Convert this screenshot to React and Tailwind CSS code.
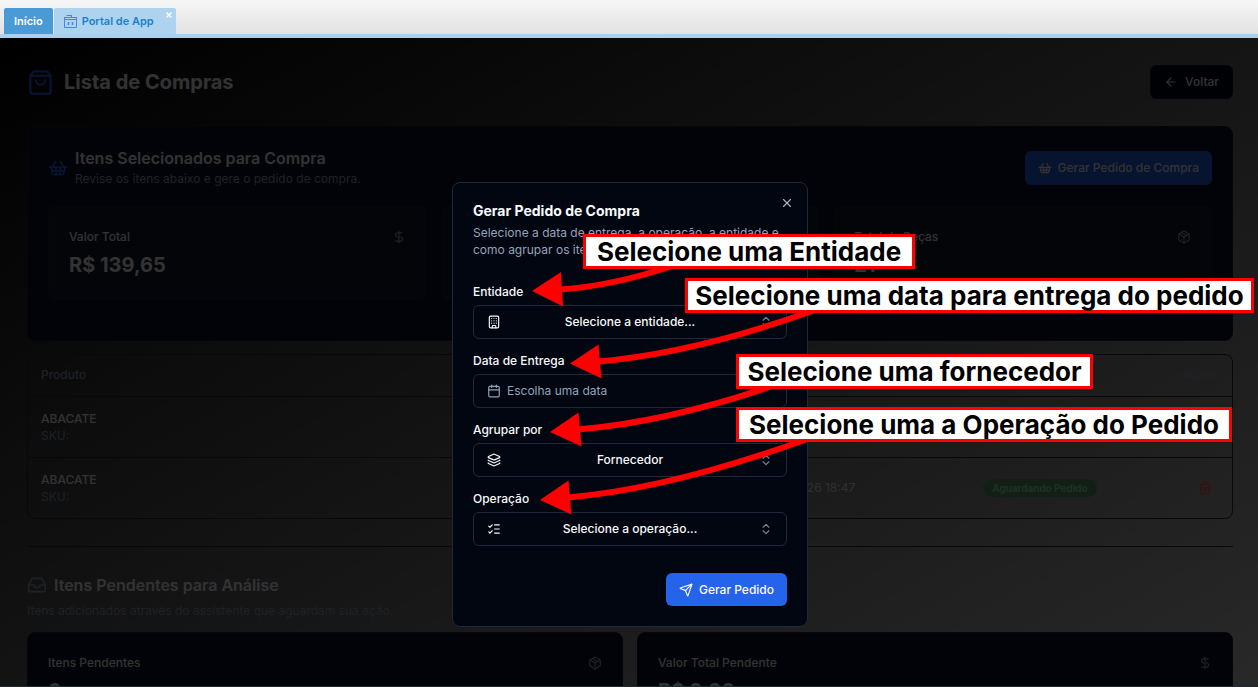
import React from 'react';
import {
  ArrowLeft,
  Building,
  Calendar,
  ChevronsUpDown,
  DollarSign,
  Inbox,
  Layers,
  ListChecks,
  Package,
  Send,
  ShoppingBag,
  ShoppingBasket,
  Trash2,
  X
} from 'lucide-react';

const itens = [
  { id: 1, nome: 'ABACATE', data: '05/01/2026 18:47', status: 'Aguardando Pedido' },
  { id: 2, nome: 'ABACATE', data: '05/01/2026 18:47', status: 'Aguardando Pedido' }
];

// Pequeno ícone de portal usado na aba
function PortalIcon() {
  return (
    <svg width="13" height="13" viewBox="0 0 13 13" fill="none" stroke="#4285f4" aria-hidden="true">
      <path d="M0.5 4.500h12v8h-12z" />
      <path d="M0 2.500h13M2.500 0.500h5M7.500 0v3M0.500 2v3M12.500 2v3" />
      <path d="M4.500 7v3M8.500 7v3" strokeWidth="1.500" />
    </svg>
  );
}

function TabBar() {
  return (
    <nav className="flex h-[38px] shrink-0 items-end gap-px border-b-4 border-[#a9d0ed] bg-linear-to-b from-[#f6f6f6] to-[#e2e2e2] pl-1 text-[11px] font-semibold">
      <a href="#inicio" className="flex h-[26px] items-center rounded-t-xs bg-[#4a9ad6] px-[10px] text-white">
        Início
      </a>
      <div className="relative flex h-[26px] items-center rounded-t-xs bg-[#aed3ef] pr-[22px] pl-[10px] text-[#1c81cc]">
        <a href="#portal" className="flex items-center gap-[5px]">
          <PortalIcon />
          Portal de App
        </a>
        <button type="button" aria-label="Fechar aba" className="absolute top-[3px] right-[3px] text-white">
          <X size={8} strokeWidth={4} />
        </button>
      </div>
    </nav>
  );
}

function StatCard({ label, value, icon: Icon, className }) {
  return (
    <div className={`flex-1 rounded-lg border p-5 ${className}`}>
      <div className="flex items-center justify-between">
        <h3 className="text-xs leading-5 font-medium">{label}</h3>
        <Icon size={14} className="text-[#94a3b8]" />
      </div>
      <p className="mt-1 text-xl leading-7 font-bold">{value}</p>
    </div>
  );
}

function ItensTable() {
  return (
    <div className="mt-[13px] overflow-hidden rounded-lg border border-[#1e293b]">
      <table className="w-full table-fixed text-left text-xs">
        <thead>
          <tr className="h-[41px] border-b border-[#1e293b] text-[#94a3b8]">
            <th className="px-[13px] font-medium">Produto</th>
            <th aria-label="Data" className="w-[230px]" />
            <th aria-label="Status" className="w-[216px]" />
            <th className="w-[84px] px-[14px] text-right font-medium">Ações</th>
          </tr>
        </thead>
        <tbody>
          {itens.map((item) => (
            <tr key={item.id} className="h-[61px] border-b border-[#1e293b] last:border-b-0">
              <td className="px-[13px] leading-[17px]">
                <div className="font-medium">{item.nome}</div>
                <div className="text-[#94a3b8]">SKU:</div>
              </td>
              <td className="px-[54px] whitespace-nowrap text-[#e2e8f0]">{item.data}</td>
              <td className="text-center">
                <span className="inline-block rounded-full bg-[#5f9a70] px-[9px] text-[10px] leading-[18px] font-semibold text-[#8ffcb6]">
                  {item.status}
                </span>
              </td>
              <td className="pr-[20px] text-right">
                <button type="button" aria-label="Remover item" className="align-middle text-[#ff5050]">
                  <Trash2 size={14} />
                </button>
              </td>
            </tr>
          ))}
        </tbody>
      </table>
    </div>
  );
}

function ListaCompras() {
  return (
    <div className="min-h-full bg-linear-to-br/srgb from-black to-[#cfcfcf] pt-[27px] pr-[25px] pl-[27px] text-[#f8fafc]">
      <header className="flex items-center justify-between">
        <h1 className="flex items-center gap-[10px] text-xl font-bold">
          <ShoppingBag size={27} className="text-[#2563eb]" />
          Lista de Compras
        </h1>
        <button type="button" className="flex h-[34px] items-center gap-[7px] rounded-md border border-[#0f172a] bg-[#020617] px-[13px] text-xs font-medium">
          <ArrowLeft size={14} />
          Voltar
        </button>
      </header>

      <section className="mt-[27px] rounded-lg border border-[#172036] bg-[#0a0f28] px-5 pt-5 pb-10">
        <div className="flex items-center justify-between">
          <div className="flex items-center gap-[7px]">
            <ShoppingBasket size={20} className="text-[#2563eb]" />
            <div>
              <h2 className="text-base leading-[22px] font-semibold">Itens Selecionados para Compra</h2>
              <p className="text-xs leading-5 text-[#94a3b8]">Revise os itens abaixo e gere o pedido de compra.</p>
            </div>
          </div>
          <button type="button" className="flex h-[34px] items-center gap-[6px] rounded-md bg-[#2563eb] px-[13px] text-xs font-medium">
            <ShoppingBasket size={14} />
            Gerar Pedido de Compra
          </button>
        </div>
        <div className="mt-[17px] flex gap-[14px]">
          <StatCard label="Valor Total" value="R$ 139,65" icon={DollarSign} className="border-[#1c2232] bg-[#141a2a]" />
          <StatCard label="Total de Itens" value="2" icon={Layers} className="border-[#1c2232] bg-[#141a2a]" />
          <StatCard label="Total de Peças" value="21" icon={Package} className="border-[#1c2232] bg-[#141a2a]" />
        </div>
      </section>

      <ItensTable />

      <hr className="mt-[27px] border-[#1e293b]" />

      <h2 className="mt-[27px] flex items-center gap-[7px] text-base leading-[22px] font-semibold">
        <Inbox size={20} className="text-[#94a3b8]" />
        Itens Pendentes para Análise
      </h2>
      <p className="mt-[6px] text-xs leading-[18px] text-[#94a3b8]">
        Itens adicionados através do assistente que aguardam sua ação.
      </p>
      <div className="mt-3 flex gap-[14px]">
        <StatCard label="Itens Pendentes" value="0" icon={Package} className="border-[#172036] bg-[#0a0f28]" />
        <StatCard label="Valor Total Pendente" value="R$ 0,00" icon={DollarSign} className="border-[#172036] bg-[#0a0f28]" />
      </div>
    </div>
  );
}

function SelectField({ id, label, icon: Icon, placeholder }) {
  return (
    <div className="flex flex-col gap-[7px]">
      <label htmlFor={id} className="text-xs leading-3 font-medium">{label}</label>
      <div className="relative">
        <Icon size={14} className="pointer-events-none absolute top-[10px] left-[14px]" />
        <select
          id={id}
          className="h-[34px] w-full appearance-none rounded-md border border-[#1e293b] bg-[#020611] px-8 text-center text-xs font-medium"
        >
          <option>{placeholder}</option>
        </select>
        <ChevronsUpDown size={14} className="pointer-events-none absolute top-[10px] right-[14px] opacity-50" />
      </div>
    </div>
  );
}

function PedidoDialog() {
  return (
    <div
      role="dialog"
      aria-labelledby="pedido-titulo"
      className="relative w-[356px] rounded-lg border border-[#1e293b] bg-[#020611] p-5 text-[#f8fafc]"
    >
      <h2 id="pedido-titulo" className="text-sm leading-4 font-bold">Gerar Pedido de Compra</h2>
      <p className="mt-[5px] text-xs leading-[17px] text-[#94a3b8]">
        Selecione a data de entrega, a operação, a entidade e como agrupar os itens.
      </p>
      <button type="button" aria-label="Fechar" className="absolute top-[13px] right-[13px] opacity-70">
        <X size={14} />
      </button>

      <form className="mt-7 flex flex-col gap-4">
        <SelectField id="entidade" label="Entidade" icon={Building} placeholder="Selecione a entidade..." />
        <div className="flex flex-col gap-[7px]">
          <label htmlFor="data-entrega" className="text-xs leading-3 font-medium">Data de Entrega</label>
          <button
            id="data-entrega"
            type="button"
            className="flex h-[34px] items-center gap-[6px] rounded-md border border-[#1e293b] px-[13px] text-xs text-[#94a3b8]"
          >
            <Calendar size={14} />
            Escolha uma data
          </button>
        </div>
        <SelectField id="agrupar" label="Agrupar por" icon={Layers} placeholder="Fornecedor" />
        <SelectField id="operacao" label="Operação" icon={ListChecks} placeholder="Selecione a operação..." />
        <button
          type="button"
          className="mt-[11px] flex h-[33px] items-center gap-[6px] self-end rounded-md bg-[#2563eb] px-[13px] text-xs font-medium"
        >
          <Send size={14} />
          Gerar Pedido
        </button>
      </form>
    </div>
  );
}

// Setas e legendas do tutorial, ancoradas no canto do diálogo
function Anotacoes() {
  const caixa = 'absolute flex h-[35px] items-center justify-center border-3 border-[#ff0000] bg-white text-[26px] font-bold whitespace-nowrap text-black';
  return (
    <div className="pointer-events-none absolute top-0 left-0">
      <svg width="356" height="445" viewBox="452 182 356 445" className="absolute top-0 left-0 max-w-none overflow-visible" aria-hidden="true">
        <g fill="none" stroke="#ff0000" strokeWidth="6">
          <path d="M560 289.500Q612 286 672 266" />
          <path d="M598 361.500Q695 353 815 310" />
          <path d="M578 429.500Q668 422 775 385" />
          <path d="M568 497.500Q670 489 810 438" />
        </g>
        <g fill="#ff0000">
          <path d="M532 291 561 272 563 306.500z" />
          <path d="M570 363.500 598.500 344.500 601.500 378.500z" />
          <path d="M550 432 578.500 412.500 581.500 446.500z" />
          <path d="M540 500 568.500 480.500 571.500 514.500z" />
        </g>
      </svg>
      <div className={`${caixa} top-[52px] left-[131px] w-[332px]`}>Selecione uma Entidade</div>
      <div className={`${caixa} top-[96px] left-[233px] w-[569px]`}>Selecione uma data para entrega do pedido</div>
      <div className={`${caixa} top-[172px] left-[284px] w-[357px]`}>Selecione uma fornecedor</div>
      <div className={`${caixa} top-[225px] left-[284px] w-[496px]`}>Selecione uma a Operação do Pedido</div>
    </div>
  );
}

export default function App() {
  return (
    <div className="flex h-screen flex-col overflow-hidden font-['Inter',sans-serif]">
      <TabBar />
      <main className="relative flex-1 overflow-hidden border-b border-[#1d2b30]">
        <ListaCompras />
        <div className="absolute inset-0 flex items-start justify-center bg-black/80 pt-36 pl-0.5">
          <div className="relative">
            <PedidoDialog />
            <Anotacoes />
          </div>
        </div>
      </main>
    </div>
  );
}
